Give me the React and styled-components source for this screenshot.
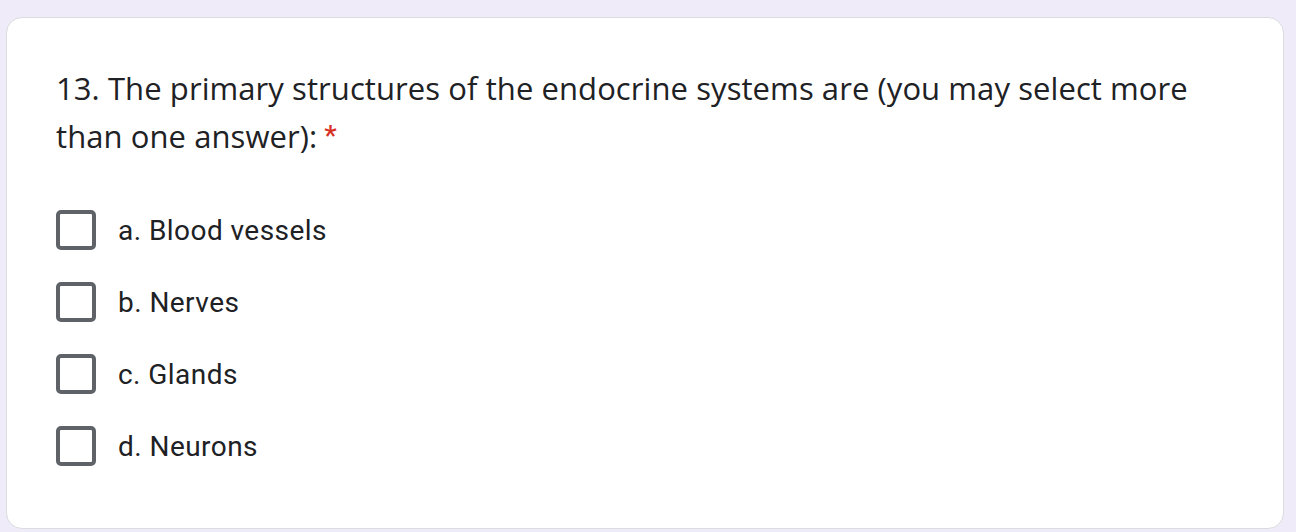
import React from "react";
import styled, { createGlobalStyle } from "styled-components";

const Global = createGlobalStyle`
  html, body { margin: 0; padding: 0; background: #efebf8; }
  #root { width: 1296px; height: 532px; overflow: hidden; }
`;

const Page = styled.div`
  box-sizing: border-box;
  width: 1296px;
  height: 532px;
  padding: 17px 12px 0 6px;
  background: #efebf8;
`;

const Card = styled.div`
  box-sizing: border-box;
  width: 1278px;
  height: 512px;
  background: #fff;
  border: 1px solid #dadce0;
  border-radius: 16px;
  padding: 46px 47px 47px 49px;
  display: flex;
  flex-direction: column;
`;

const Title = styled.div`
  font-family: "Open Sans", Roboto, sans-serif;
  font-size: 31px;
  line-height: 48px;
  color: #202124;
  letter-spacing: 0.08px;
  max-width: 1150px;
`;

const Required = styled.span`
  color: #d93025;
  margin-left: 7px;
  font-family: Roboto, sans-serif;
  font-size: 28px;
  font-weight: 500;
  vertical-align: 3px;
`;

const Options = styled.div`
  margin-top: 34px;
  display: flex;
  flex-direction: column;
`;

const Row = styled.label`
  display: flex;
  align-items: center;
  height: 72px;
`;

const Box = styled.span`
  box-sizing: border-box;
  width: 40px;
  height: 40px;
  border: 4px solid #5f6368;
  border-radius: 5px;
  flex: none;
`;

const OptionText = styled.span`
  margin-left: 22px;
  font-family: Roboto, sans-serif;
  font-size: 28px;
  color: #202124;
  letter-spacing: 0.45px;
`;

const options = ["a. Blood vessels", "b. Nerves", "c. Glands", "d. Neurons"];

export default function App() {
  return (
    <>
      <Global />
      <Page>
        <Card>
          <Title>
            13. The primary structures of the endocrine systems are (you may select more than one answer):
            <Required>*</Required>
          </Title>
          <Options>
            {options.map((o) => (
              <Row key={o}>
                <Box />
                <OptionText>{o}</OptionText>
              </Row>
            ))}
          </Options>
        </Card>
      </Page>
    </>
  );
}
